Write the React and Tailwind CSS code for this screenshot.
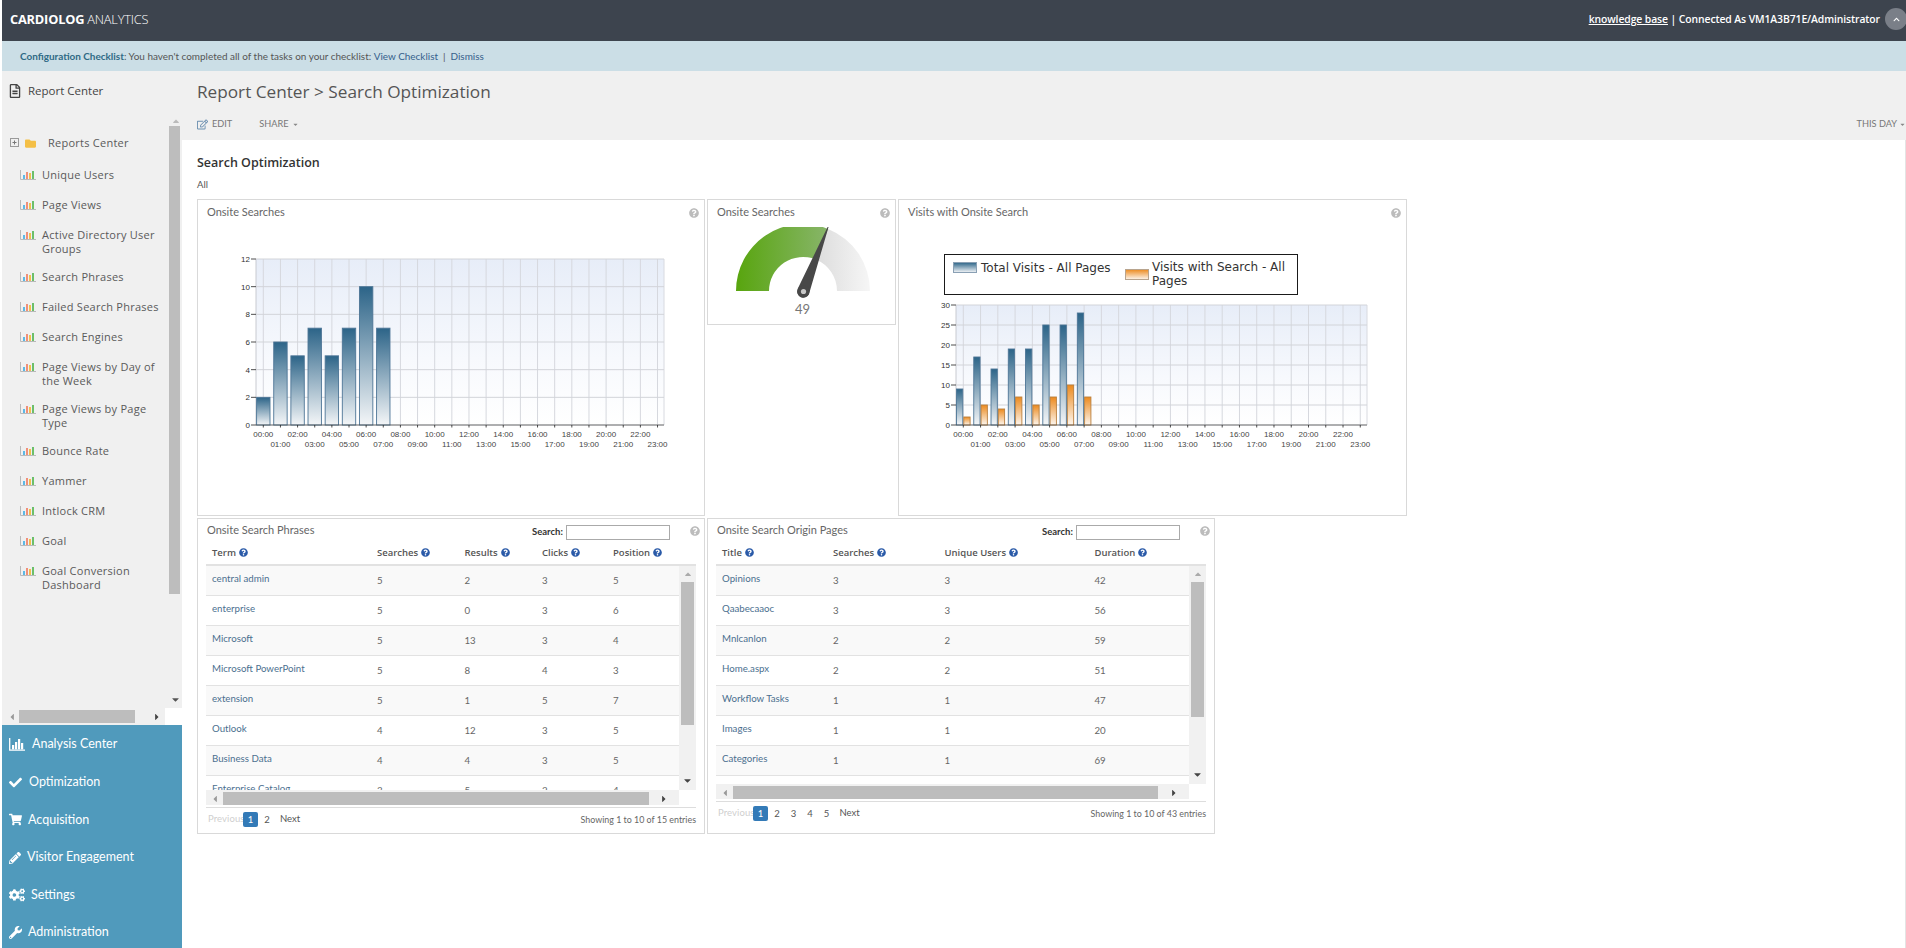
import React from "react";
import { FaCheck, FaShoppingCart, FaPencilAlt, FaCogs, FaWrench, FaRegEdit, FaRegFileAlt, FaFolder, FaQuestionCircle, FaChevronUp, FaCaretDown, FaCaretUp, FaCaretLeft, FaCaretRight } from "react-icons/fa";

const OS = "font-['Open_Sans','Noto_Sans',sans-serif]";
const LT = "font-['Lato','Open_Sans',sans-serif]";

function ColorChart() {
  return (
    <svg width="16" height="10" viewBox="0 0 16 10" className="shrink-0">
      <path d="M0.5 0v9.5H16" fill="none" stroke="#b9b9b9" strokeWidth="1" />
      <rect x="3" y="5" width="2" height="4" fill="#5cb8e6" />
      <rect x="6" y="2" width="2" height="7" fill="#ef8f7a" />
      <rect x="9" y="3" width="2" height="6" fill="#f2c14e" />
      <rect x="12" y="1" width="2" height="8" fill="#6cbf6a" />
    </svg>
  );
}

function WhiteChart() {
  return (
    <svg width="16" height="13" viewBox="0 0 16 13" className="shrink-0">
      <path d="M0.7 0v12.2H16" fill="none" stroke="#fff" strokeWidth="1.3" />
      <rect x="3" y="7" width="2.2" height="4.4" fill="#fff" />
      <rect x="6" y="4" width="2.2" height="7.4" fill="#fff" />
      <rect x="9" y="1" width="2.2" height="10.4" fill="#fff" />
      <rect x="12" y="5" width="2.2" height="6.4" fill="#fff" />
    </svg>
  );
}

const treeItems = [
  ["Unique Users"],
  ["Page Views"],
  ["Active Directory User", "Groups"],
  ["Search Phrases"],
  ["Failed Search Phrases"],
  ["Search Engines"],
  ["Page Views by Day of", "the Week"],
  ["Page Views by Page", "Type"],
  ["Bounce Rate"],
  ["Yammer"],
  ["Intlock CRM"],
  ["Goal"],
  ["Goal Conversion", "Dashboard"],
];

const navItems = [
  [<WhiteChart />, "Analysis Center", "gap-[7px]"],
  [<FaCheck size={13} color="#fff" />, "Optimization", "gap-[7px]"],
  [<FaShoppingCart size={13} color="#fff" />, "Acquisition", "gap-[6px]"],
  [<FaPencilAlt size={12} color="#fff" />, "Visitor Engagement", "gap-[6px]"],
  [<FaCogs size={16} color="#fff" />, "Settings", "gap-[6px]"],
  [<FaWrench size={13} color="#fff" />, "Administration", "gap-[6px]"],
];

function Sidebar() {
  return (
    <aside className="w-[180px] h-[877px] shrink-0 flex flex-col bg-[#f0f0f0]">
      <div className="h-[39px] flex items-center pl-[6px] pt-[1px] gap-[6px] shrink-0">
        <FaRegFileAlt size={14} color="#444" />
        <span className="text-[11.5px] text-[#444]">Report Center</span>
      </div>
      <div className="flex h-[598px] shrink-0">
        <div className="w-[167px] shrink-0 pt-[20px]">
          <div className="h-[26px] mb-[4px] flex items-center pl-[8px]">
            <svg width="10" height="10" viewBox="0 0 10 10" className="shrink-0">
              <rect x="0.5" y="0.5" width="8" height="8" fill="none" stroke="#9a9a9a" />
              <path d="M2.5 4.5h4M4.5 2.5v4" stroke="#777" />
            </svg>
            <FaFolder size={11} color="#f4bf46" className="ml-[5px] shrink-0" />
            <span className="ml-[12px] text-[11px] tracking-[0.25px] text-[#5a5a5a]">Reports Center</span>
          </div>
          {treeItems.map((lines) => (
            <div key={lines[0]} className={`flex pl-[18px] pt-[8px] ${lines[1] ? "h-[42px]" : "h-[30px]"}`}>
              <div className="mt-[2px] w-[22px] shrink-0"><ColorChart /></div>
              <div className="text-[11px] tracking-[0.25px] leading-[14px] text-[#5a5a5a] whitespace-nowrap">
                {lines.map((l) => <div key={l}>{l}</div>)}
              </div>
            </div>
          ))}
        </div>
        <div className="w-[13px] shrink-0 flex flex-col">
          <div className="h-[16px] flex items-end justify-center"><FaCaretUp size={10} color="#bbb" /></div>
          <div className="w-[11px] h-[468px] bg-[#bdbdbd]" />
          <div className="flex-1 flex items-end justify-center pb-[3px]"><FaCaretDown size={11} color="#555" /></div>
        </div>
      </div>
      <div className="h-[17px] flex shrink-0">
        <div className="w-[163px] h-[15px] mt-[1px] flex items-center bg-[#f0f0f0] shrink-0">
          <FaCaretLeft size={10} color="#999" className="ml-[5px] shrink-0" />
          <div className="ml-[2px] w-[116px] h-[13px] bg-[#bdbdbd]" />
          <FaCaretRight size={10} color="#444" className="ml-[17px] shrink-0" />
        </div>
        <div className="flex-1 bg-white" />
      </div>
      <div className={`flex-1 bg-[#509abc] flex flex-col pt-[1px] ${LT}`}>
        {navItems.map(([icon, label, gap]) => (
          <div key={label} className={`h-[37.6px] flex items-center pl-[7px] ${gap}`}>
            {icon}
            <span className="text-[12.5px] text-white">{label}</span>
          </div>
        ))}
      </div>
    </aside>
  );
}

function HelpIcon() {
  return <FaQuestionCircle size={10} color="#bcbcbc" className="shrink-0" />;
}

function BlueHelp() {
  return <FaQuestionCircle size={9} color="#2a5aa8" className="shrink-0" />;
}

const hours = Array.from({ length: 24 }, (_, i) => `${String(i).padStart(2, "0")}:00`);

function Chart({ x0, x1, y0, y1, max, step, t0, pitch, series, barW, idp }) {
  const unit = (y0 - y1) / max;
  const yv = [];
  for (let v = 0; v <= max; v += step) yv.push(v);
  return (
    <>
      <defs>
        <linearGradient id={`${idp}bg`} x1="0" y1="0" x2="0" y2="1">
          <stop offset="0" stopColor="#e7edf8" />
          <stop offset="0.6" stopColor="#f7f9fd" />
          <stop offset="1" stopColor="#ffffff" />
        </linearGradient>
        <linearGradient id={`${idp}blue`} x1="0" y1="0" x2="0" y2="1">
          <stop offset="0" stopColor="#2c6488" />
          <stop offset="1" stopColor="#f4f6f8" />
        </linearGradient>
        <linearGradient id={`${idp}orange`} x1="0" y1="0" x2="0" y2="1">
          <stop offset="0" stopColor="#ec8a1e" />
          <stop offset="1" stopColor="#fdf6ee" />
        </linearGradient>
      </defs>
      <rect x={x0} y={y1} width={x1 - x0} height={y0 - y1} fill={`url(#${idp}bg)`} />
      {hours.map((h, i) => (
        <line key={h} x1={t0 + i * pitch} x2={t0 + i * pitch} y1={y1} y2={y0} stroke="#d6d8de" />
      ))}
      <line x1={x0} x2={x0} y1={y1} y2={y0} stroke="#c8cad0" />
      <line x1={x1} x2={x1} y1={y1} y2={y0} stroke="#d8dae0" />
      {yv.map((v) => (
        <g key={v}>
          <line x1={x0} x2={x1} y1={y0 - v * unit} y2={y0 - v * unit} stroke="#d2d4d9" />
          <line x1={x0 - 5} x2={x0} y1={y0 - v * unit} y2={y0 - v * unit} stroke="#222" strokeWidth="0.8" />
          <text x={x0 - 6} y={y0 - v * unit + 3} textAnchor="end" fontSize="8" fontFamily="Liberation Sans" fill="#333">{v}</text>
        </g>
      ))}
      {series.map((s, si) =>
        s.data.map((v, i) => {
          const cx = t0 + i * pitch;
          const x = cx + s.off;
          return (
            <rect key={`${si}-${i}`} x={x + 0.5} y={y0 - v * unit} width={barW - 1} height={v * unit} fill={`url(#${idp}${s.grad})`} stroke={s.stroke} strokeWidth="0.9" />
          );
        })
      )}
      <line x1={x0} x2={x1} y1={y0} y2={y0} stroke="#444" strokeWidth="0.7" />
      {hours.map((h, i) => {
        const x = t0 + i * pitch;
        return (
          <g key={h}>
            <line x1={x} x2={x} y1={y0} y2={y0 + 2.5} stroke="#222" strokeWidth="0.8" />
            <text x={x} y={y0 + (i % 2 ? 22 : 12)} textAnchor="middle" fontSize="8" fontFamily="Liberation Sans" fill="#444">{h}</text>
          </g>
        );
      })}
    </>
  );
}

function PanelTitle({ title }) {
  return (
    <div className={`flex items-center justify-between h-[27px] pl-[9px] pr-[5px] pb-[2px] shrink-0 ${LT}`}>
      <span className="text-[11px] text-[#666]">{title}</span>
      <HelpIcon />
    </div>
  );
}

function Chart1() {
  return (
    <svg width="506" height="288" viewBox="198 227 506 288" className="block">
      <Chart x0={256} x1={664} y0={425} y1={259} max={12} step={2} t0={263.3} pitch={17.14} barW={14.4} idp="a"
        series={[{ data: [2, 6, 5, 7, 5, 7, 10, 7], off: -7.2, grad: "blue", stroke: "#4d7596" }]} />
    </svg>
  );
}

function Chart2() {
  return (
    <svg width="507" height="288" viewBox="899 227 507 288" className="block">
      <defs>
        <linearGradient id="lblue" x1="0" y1="0" x2="0" y2="1">
          <stop offset="0" stopColor="#2c6488" />
          <stop offset="1" stopColor="#f4f6f8" />
        </linearGradient>
        <linearGradient id="lorange" x1="0" y1="0" x2="0" y2="1">
          <stop offset="0" stopColor="#ec8a1e" />
          <stop offset="1" stopColor="#fdf6ee" />
        </linearGradient>
      </defs>
      <rect x="944.5" y="254.5" width="353" height="40" fill="#fff" stroke="#1a1a1a" strokeWidth="1" />
      <rect x="953.5" y="262.5" width="23" height="10" fill="url(#lblue)" stroke="#8aa0b4" />
      <text x="981" y="272" fontSize="12" fontFamily="DejaVu Sans" fill="#333">Total Visits - All Pages</text>
      <rect x="1125.5" y="269.5" width="23" height="10" fill="url(#lorange)" stroke="#b8a48e" />
      <text x="1152" y="271" fontSize="12" fontFamily="DejaVu Sans" fill="#333">Visits with Search - All</text>
      <text x="1152" y="285" fontSize="12" fontFamily="DejaVu Sans" fill="#333">Pages</text>
      <Chart x0={956} x1={1367} y0={425} y1={305} max={30} step={5} t0={963.3} pitch={17.26} barW={7.3} idp="b"
        series={[
          { data: [9, 17, 14, 19, 19, 25, 25, 28], off: -7.3, grad: "blue", stroke: "#4d7596" },
          { data: [2, 5, 4, 7, 5, 7, 10, 7], off: 0, grad: "orange", stroke: "#b97f3e" },
        ]} />
    </svg>
  );
}

function Gauge() {
  const cx = 803, cy = 291;
  const R = 67, r = 34;
  const ang = (112 * Math.PI) / 180;
  const ox = cx - R * Math.cos(ang), oy = cy - R * Math.sin(ang);
  const ix = cx - r * Math.cos(ang), iy = cy - r * Math.sin(ang);
  return (
    <svg width="187" height="97" viewBox="708 227 187 97" className="block">
      <defs>
        <linearGradient id="gGreen" x1="0" y1="0" x2="1" y2="0">
          <stop offset="0" stopColor="#58a50e" />
          <stop offset="1" stopColor="#88b56a" />
        </linearGradient>
        <linearGradient id="gGrey" x1="0" y1="0" x2="1" y2="0">
          <stop offset="0" stopColor="#dcdcdc" />
          <stop offset="1" stopColor="#f6f6f6" />
        </linearGradient>
      </defs>
      <path d={`M${cx + R} ${cy}A${R} ${R} 0 0 0 ${ox} ${oy}L${ix} ${iy}A${r} ${r} 0 0 1 ${cx + r} ${cy}Z`} fill="url(#gGrey)" />
      <path d={`M${cx - R} ${cy}A${R} ${R} 0 0 1 ${ox} ${oy}L${ix} ${iy}A${r} ${r} 0 0 0 ${cx - r} ${cy}Z`} fill="url(#gGreen)" />
      <path d="M830 222L809 294A6.2 6.2 0 0 1 797.6 289Z" fill="#484848" />
      <circle cx="803.5" cy="291.5" r="6" fill="#484848" />
      <circle cx="803.5" cy="291.5" r="2.6" fill="#c8c8c8" />
      <text x="802.5" y="314" textAnchor="middle" fontSize="13" fontFamily="Lato" fill="#777">49</text>
    </svg>
  );
}

function ChartPanel({ title, width, height, children }) {
  return (
    <section className={`${width} ${height} border border-[#d9d9d9] bg-white flex flex-col shrink-0`}>
      <PanelTitle title={title} />
      {children}
    </section>
  );
}

function VScroll({ thumb }) {
  return (
    <div className="w-[17px] shrink-0 bg-[#f1f1f1] flex flex-col">
      <div className="h-[16px] flex items-center justify-center"><FaCaretUp size={10} color="#aaa" /></div>
      <div className={`mx-[2px] bg-[#bdbdbd] ${thumb}`} />
      <div className="flex-1 flex items-end justify-center pb-[4px]"><FaCaretDown size={11} color="#444" /></div>
    </div>
  );
}

function HScroll({ thumb }) {
  return (
    <div className="flex h-[15px] shrink-0">
      <div className="w-[473px] bg-[#f1f1f1] flex items-end">
        <div className="w-[17px] h-[13px] flex items-center justify-center"><FaCaretLeft size={10} color="#999" /></div>
        <div className={`h-[13px] bg-[#bdbdbd] ${thumb}`} />
        <div className="flex-1 h-[13px] flex items-center justify-center"><FaCaretRight size={10} color="#444" /></div>
      </div>
    </div>
  );
}

function Pager({ pages, info }) {
  return (
    <div className="flex items-center justify-between border-t border-[#ddd] h-[24px] text-[9.5px] shrink-0">
      <div className="flex items-center pl-[2px]">
        <span className="w-[35px] text-[#cfcfcf] tracking-[0.1px]">Previous</span>
        {pages.map((p) => (
          <span key={p} className="w-[16.5px]">
            <span className={`block h-[15px] w-[15px] leading-[15px] text-center rounded-[2px] ${p === 1 ? "bg-[#337ab7] text-white" : "text-[#555]"}`}>{p}</span>
          </span>
        ))}
        <span className="ml-[4px] text-[#555]">Next</span>
      </div>
      <span className="text-[8.9px] text-[#666]">{info}</span>
    </div>
  );
}

function TablePanel({ title, cols, gridClass, rows, thumb, hthumb, bodyH, pages, info }) {
  return (
    <section className={`w-[508px] h-[316px] shrink-0 border border-[#d9d9d9] bg-white flex flex-col px-[8px] ${LT}`}>
      <div className="h-[27px] flex items-center shrink-0">
        <span className="pl-[1px] text-[11px] text-[#666] w-[326px] shrink-0 -mt-[4px]">{title}</span>
        <span className="text-[9.5px] font-bold text-[#333] w-[34px] shrink-0">Search:</span>
        <input aria-label="Search" className="w-[104px] h-[15px] border border-[#aaa] bg-white shrink-0" />
        <span className="ml-[20px] -mt-[4px] shrink-0"><HelpIcon /></span>
      </div>
      <div className={`grid ${gridClass} h-[20px] border-b-2 border-[#e2e2e2] pl-[6px] shrink-0 ${OS}`}>
        {cols.map((c) => (
          <div key={c} className="flex items-start gap-[3px] text-[9.5px] leading-[13px] font-semibold text-[#555]">
            <span>{c}</span>
            <span className="mt-[1.5px]"><BlueHelp /></span>
          </div>
        ))}
      </div>
      <div className={`flex shrink-0 ${bodyH}`}>
        <div className="w-[473px] shrink-0 overflow-hidden">
          {rows.map((r, i) => (
            <div key={r[0]} className={`grid ${gridClass} h-[30px] border-b border-[#e2e2e2] pl-[6px] text-[9.7px] leading-[14px] ${i % 2 ? "bg-white" : "bg-[#f9f9f9]"}`}>
              {r.map((c, j) => (
                <div key={j} className={j === 0 ? "pt-[5px] text-[#4b6f8f]" : "pt-[7px] text-[#666]"}>{c}</div>
              ))}
            </div>
          ))}
        </div>
        <VScroll thumb={thumb} />
      </div>
      <HScroll thumb={hthumb} />
      <div className="mt-[2px]"><Pager pages={pages} info={info} /></div>
    </section>
  );
}

const rows1 = [
  ["central admin", 5, 2, 3, 5],
  ["enterprise", 5, 0, 3, 6],
  ["Microsoft", 5, 13, 3, 4],
  ["Microsoft PowerPoint", 5, 8, 4, 3],
  ["extension", 5, 1, 5, 7],
  ["Outlook", 4, 12, 3, 5],
  ["Business Data", 4, 4, 3, 5],
  ["Enterprise Catalog", 3, 5, 2, 4],
];

const rows2 = [
  ["Opinions", 3, 3, 42],
  ["Qaabecaaoc", 3, 3, 56],
  ["Mnlcanlon", 2, 2, 59],
  ["Home.aspx", 2, 2, 51],
  ["Workflow Tasks", 1, 1, 47],
  ["Images", 1, 1, 20],
  ["Categories", 1, 1, 69],
];

export default function App() {
  return (
    <div className={`w-[1906px] h-[948px] overflow-hidden pl-[2px] bg-white ${OS}`}>
      <header className="h-[41px] bg-[#3d444e] flex items-center justify-between text-white">
        <div className="pl-[8px] text-[12.8px] -mt-[2px] tracking-[-0.2px]">
          <span className="font-bold">CARDIOLOG</span> <span className="font-light">ANALYTICS</span>
        </div>
        <div className="flex items-center -mt-[3px]">
          <span className="mt-[2px] text-[10.4px] font-semibold tracking-[-0.1px]"><span className="underline">knowledge base</span> | Connected As VM1A3B71E/Administrator</span>
          <span className="ml-[5px] w-[22px] h-[22px] rounded-full bg-[#7a7f88] flex items-center justify-center -mr-[1px]">
            <FaChevronUp size={7} color="#fff" />
          </span>
        </div>
      </header>
      <div className={`h-[30px] bg-[#cbdee6] flex items-center pl-[18px] text-[9.95px] text-[#555] ${LT}`}>
        <span className="font-bold text-[#2f6a85]">Configuration Checklist</span>
        <span>: You haven't completed all of the tasks on your checklist:&nbsp;</span>
        <span className="text-[#35608c]">View Checklist</span>
        <span className="mx-[5px]">|</span>
        <span className="text-[#35608c]">Dismiss</span>
      </div>
      <div className="flex">
        <Sidebar />
        <main className="flex-1 min-w-0 h-[877px] flex flex-col">
          <div className="h-[69px] bg-[#f0f0f0] pl-[15px] shrink-0">
            <div className="h-[42px] flex items-center text-[17.2px] text-[#555]">Report Center &gt; Search Optimization</div>
            <div className={`h-[22px] flex items-center text-[9.2px] text-[#777] ${LT}`}>
              <FaRegEdit size={11} color="#6b8fb0" />
              <span className="ml-[4px]">EDIT</span>
              <span className="ml-[27px]">SHARE</span>
              <FaCaretDown size={7} color="#888" className="ml-[3px]" />
              <span className="ml-auto">THIS DAY</span>
              <FaCaretDown size={7} color="#888" className="ml-[2px]" />
            </div>
          </div>
          <div className="flex-1 bg-white pl-[15px] border-r border-[#e4e4e4]">
            <h1 className="h-[15px] mt-[15px] leading-[15px] text-[12.5px] font-semibold text-[#333]">Search Optimization</h1>
            <div className={`mt-[8px] h-[14px] leading-[14px] text-[9.5px] text-[#555] ${LT}`}>All</div>
            <div className="mt-[7px] flex gap-[2px]">
              <ChartPanel title="Onsite Searches" width="w-[508px]" height="h-[317px]"><Chart1 /></ChartPanel>
              <ChartPanel title="Onsite Searches" width="w-[189px]" height="h-[126px]"><Gauge /></ChartPanel>
              <ChartPanel title="Visits with Onsite Search" width="w-[509px]" height="h-[317px]"><Chart2 /></ChartPanel>
            </div>
            <div className="mt-[2px] flex gap-[2px]">
              <TablePanel title="Onsite Search Phrases" cols={["Term", "Searches", "Results", "Clicks", "Position"]}
                gridClass="grid-cols-[165px_87.5px_77.5px_71px_1fr]" rows={rows1} thumb="h-[143px]" hthumb="w-[426px]" bodyH="h-[224px]"
                pages={[1, 2]} info="Showing 1 to 10 of 15 entries" />
              <TablePanel title="Onsite Search Origin Pages" cols={["Title", "Searches", "Unique Users", "Duration"]}
                gridClass="grid-cols-[111px_111.5px_150px_1fr]" rows={rows2} thumb="h-[135px]" hthumb="w-[425px]" bodyH="h-[218px]"
                pages={[1, 2, 3, 4, 5]} info="Showing 1 to 10 of 43 entries" />
            </div>
          </div>
        </main>
      </div>
    </div>
  );
}
